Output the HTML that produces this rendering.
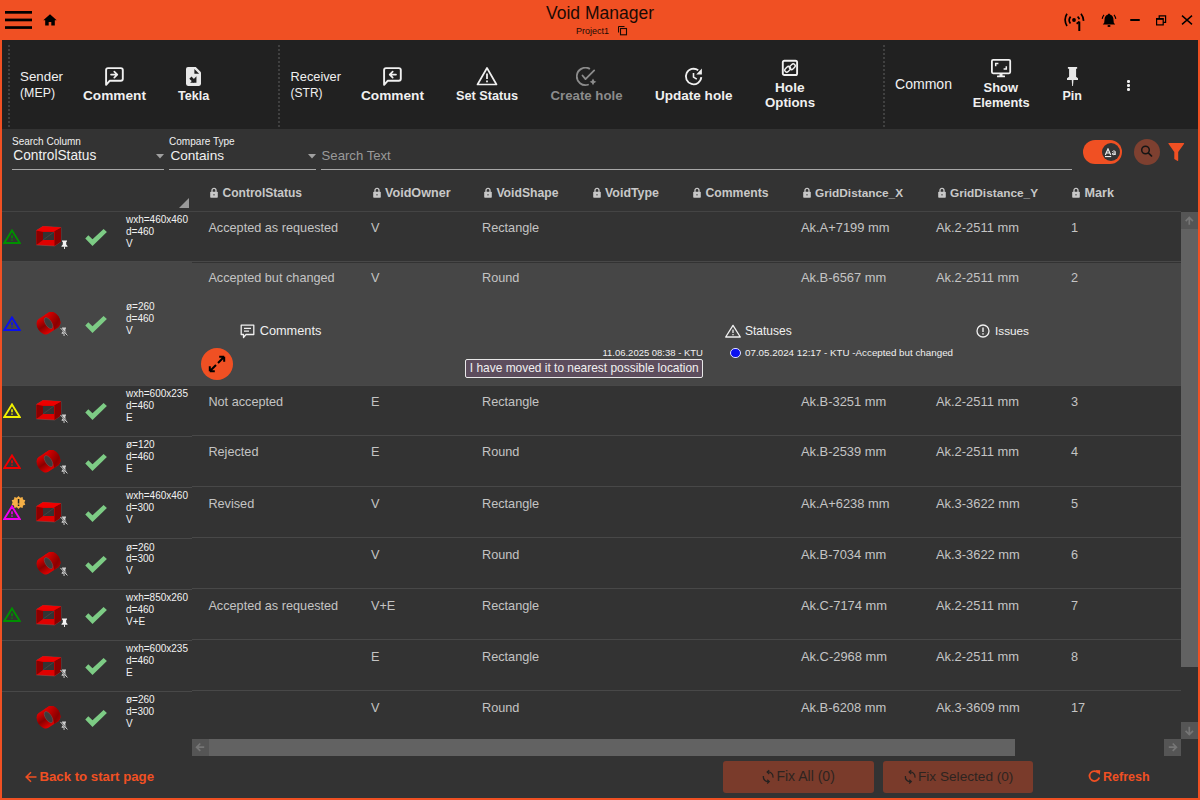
<!DOCTYPE html>
<html><head><meta charset="utf-8"><title>Void Manager</title>
<style>
html,body{margin:0;padding:0;width:1200px;height:800px;overflow:hidden;background:#333;}
.r{position:absolute;display:block;}
.t{position:absolute;white-space:nowrap;line-height:1;font-family:"Liberation Sans",sans-serif;}
</style></head><body>
<div class="r" style="left:0px;top:0px;width:1200px;height:800px;background:#333333;"></div>
<div class="r" style="left:0px;top:0px;width:1200px;height:40px;background:#f05023;"></div>
<div class="r" style="left:0px;top:40px;width:1200px;height:89px;background:#212121;"></div>
<div class="r" style="left:0px;top:0px;width:2px;height:800px;background:#f05023;"></div>
<div class="r" style="left:1198px;top:0px;width:2px;height:800px;background:#f05023;"></div>
<div class="r" style="left:0px;top:798px;width:1200px;height:2px;background:#f05023;"></div>
<div class="r" style="left:8px;top:45px;width:2px;height:82px;background:repeating-linear-gradient(to bottom,#404040 0,#404040 2px,transparent 2px,transparent 4px);"></div>
<div class="r" style="left:278px;top:45px;width:2px;height:82px;background:repeating-linear-gradient(to bottom,#404040 0,#404040 2px,transparent 2px,transparent 4px);"></div>
<div class="r" style="left:883px;top:45px;width:2px;height:82px;background:repeating-linear-gradient(to bottom,#404040 0,#404040 2px,transparent 2px,transparent 4px);"></div>
<svg class="r" style="left:5px;top:11px" width="27" height="18" viewBox="0 0 27 18"><rect x="0" y="0" width="27" height="2.7" fill="#000"/><rect x="0" y="7.6" width="27" height="2.7" fill="#000"/><rect x="0" y="15.2" width="27" height="2.7" fill="#000"/></svg>
<svg class="r" style="left:43px;top:14px" width="14" height="12" viewBox="0 0 14 12"><path d="M7 0.3 L13.7 6.3 L11.8 6.3 L11.8 11.5 L8.3 11.5 L8.3 8 L5.7 8 L5.7 11.5 L2.2 11.5 L2.2 6.3 L0.3 6.3 Z" fill="#000"/></svg>
<svg class="r" style="left:617px;top:25px" width="11" height="11" viewBox="0 0 11 11"><path d="M1.5 7.5 V1.5 H7.5" fill="none" stroke="#1a0a05" stroke-width="1"/><rect x="3.5" y="3.5" width="6" height="6.3" fill="none" stroke="#1a0a05" stroke-width="1.1"/></svg>
<svg class="r" style="left:1063px;top:12px" width="22" height="20" viewBox="0 0 22 20"><circle cx="11" cy="8" r="1.9" fill="#000"/><path d="M4 1.8 Q0.2 7.8 4 14" stroke="#000" stroke-width="1.7" fill="none"/><path d="M7.6 4.6 Q4.8 8 7.4 11.4" stroke="#000" stroke-width="1.7" fill="none"/><path d="M14.6 4.6 Q15.8 5.6 16.3 7.3" stroke="#000" stroke-width="1.7" fill="none"/><path d="M18 1.8 Q20.2 4.5 20.6 8.8" stroke="#000" stroke-width="1.7" fill="none"/><path d="M16.3 9.5 V19" stroke="#000" stroke-width="2"/><path d="M13.6 11.8 L16.3 9.8" stroke="#000" stroke-width="1.7"/></svg>
<svg class="r" style="left:1101px;top:12px" width="16" height="16" viewBox="0 0 16 16"><path d="M8 1.4 C8.8 1.4 9 2.2 9 2.6 C11.5 3.2 12.5 5.5 12.5 8 L12.8 10.8 L14.2 12.6 L1.8 12.6 L3.2 10.8 L3.5 8 C3.5 5.5 4.5 3.2 7 2.6 C7 2.2 7.2 1.4 8 1.4 Z" fill="#000"/><ellipse cx="8" cy="14" rx="1.6" ry="1.1" fill="#000"/><path d="M3 2.8 Q1.6 4.6 1.2 6.8 M13 2.8 Q14.4 4.6 14.8 6.8" stroke="#000" stroke-width="1.1" fill="none"/></svg>
<div class="r" style="left:1130px;top:19px;width:10px;height:2.4px;background:#000;border-radius:1px"></div>
<svg class="r" style="left:1155px;top:14px" width="12" height="12" viewBox="0 0 12 12"><rect x="1.6" y="4.6" width="6.6" height="6.3" fill="none" stroke="#000" stroke-width="1.2"/><rect x="1.6" y="4.2" width="6.6" height="1.6" fill="#000"/><path d="M4.2 4.2 V1.8 H10.6 V8.4 H8.2" fill="none" stroke="#000" stroke-width="1.2"/></svg>
<svg class="r" style="left:1181px;top:15px" width="12" height="10" viewBox="0 0 12 10"><path d="M1 0.6 L11 9.4 M11 0.6 L1 9.4" stroke="#000" stroke-width="1.4"/></svg>
<svg class="r" style="left:104px;top:66px" width="21" height="21" viewBox="0 0 21 21"><path d="M4 2.1 H16.8 Q18.8 2.1 18.8 4.1 V12.8 Q18.8 14.8 16.8 14.8 H5.6 L2.1 18.8 V4.1 Q2.1 2.1 4 2.1 Z" fill="none" stroke="#f0f0f0" stroke-width="1.9" stroke-linejoin="round"/><path d="M7 8.6 H13.2 M10.3 5.6 L13.3 8.6 L10.3 11.6" stroke="#f0f0f0" stroke-width="1.7" fill="none" stroke-linecap="round" stroke-linejoin="round"/></svg>
<svg class="r" style="left:381.6px;top:66px" width="21" height="21" viewBox="0 0 21 21"><path d="M4 2.1 H16.8 Q18.8 2.1 18.8 4.1 V12.8 Q18.8 14.8 16.8 14.8 H5.6 L2.1 18.8 V4.1 Q2.1 2.1 4 2.1 Z" fill="none" stroke="#f0f0f0" stroke-width="1.9" stroke-linejoin="round"/><path d="M14 8.6 H7.8 M10.7 5.6 L7.7 8.6 L10.7 11.6" stroke="#f0f0f0" stroke-width="1.7" fill="none" stroke-linecap="round" stroke-linejoin="round"/></svg>
<svg class="r" style="left:186px;top:67px" width="15" height="19" viewBox="0 0 15 19"><path d="M2 0 H9.75 L15 5.25 V16.8 Q15 18.9 13 18.9 H2 Q0 18.9 0 16.8 V2 Q0 0 2 0 Z" fill="#e8e8e8"/><path d="M8.35 2 L8.35 6.7 L13.1 6.7 Z" fill="#212121"/><path d="M10.45 9.35 V15.65 H4.15 Z" fill="#212121"/><path d="M4.4 10.6 L8.6 14.8" stroke="#212121" stroke-width="3"/></svg>
<svg class="r" style="left:476px;top:66px" width="22" height="20" viewBox="0 0 22 20"><path d="M11 2 L20.5 18.5 H1.5 Z" fill="none" stroke="#f0f0f0" stroke-width="1.7" stroke-linejoin="round"/><rect x="10.1" y="7.5" width="1.8" height="5.5" fill="#f0f0f0"/><rect x="10.1" y="14.5" width="1.8" height="1.8" fill="#f0f0f0"/></svg>
<svg class="r" style="left:576px;top:67px" width="22" height="20" viewBox="0 0 22 20"><path d="M13.3 1.6 A8.7 8.7 0 1 0 12 17.75" fill="none" stroke="#8c8c8c" stroke-width="1.8" stroke-linecap="round"/><path d="M6.5 8.5 L9.5 12.1 L18.2 3.4" fill="none" stroke="#8c8c8c" stroke-width="1.8" stroke-linecap="round" stroke-linejoin="round"/><path d="M17 11.4 Q17.7 14.1 20.4 14.8 Q17.7 15.5 17 18.2 Q16.3 15.5 13.6 14.8 Q16.3 14.1 17 11.4 Z" fill="#8c8c8c"/></svg>
<svg class="r" style="left:684px;top:67px" width="20" height="19" viewBox="0 0 20 19"><path d="M17.3 10.2 A7.75 7.75 0 1 1 14.2 3.3" fill="none" stroke="#f0f0f0" stroke-width="1.8"/><path d="M17.9 1.5 V7.4 H12.2 Z" fill="#f0f0f0"/><path d="M9.5 5.9 V10.1 L12.8 12.2" fill="none" stroke="#f0f0f0" stroke-width="1.6" stroke-linejoin="round"/></svg>
<svg class="r" style="left:781px;top:59px" width="18" height="18" viewBox="0 0 18 18"><rect x="1.8" y="1.75" width="14.3" height="14.3" rx="1.6" fill="none" stroke="#f0f0f0" stroke-width="1.9"/><g transform="translate(9 9) rotate(-45)"><rect x="-0.6" y="-1.25" width="6.4" height="4" rx="2" fill="none" stroke="#f0f0f0" stroke-width="1.4"/><rect x="-5.8" y="-2.75" width="6.4" height="4" rx="2" fill="none" stroke="#f0f0f0" stroke-width="1.4"/></g></svg>
<svg class="r" style="left:990px;top:58px" width="22" height="20" viewBox="0 0 22 20"><rect x="1.9" y="1.9" width="18.3" height="13.4" rx="1.2" fill="none" stroke="#f0f0f0" stroke-width="1.8"/><path d="M5.7 8.2 V5.4 H8.4 M16.3 8.2 V11 H13.6" fill="none" stroke="#f0f0f0" stroke-width="1.5"/><rect x="9.5" y="15" width="3" height="3" fill="#f0f0f0"/><rect x="7" y="17.6" width="8" height="1.6" rx="0.5" fill="#f0f0f0"/></svg>
<svg class="r" style="left:1066px;top:66px" width="13" height="21" viewBox="0 0 13 21"><path d="M1.9 0.9 H11.15 V2.8 H10.1 V10.7 L12 12.3 V14 H1 V12.3 L3.1 10.7 V2.8 H1.9 Z" fill="#e8e8e8"/><path d="M5.75 14 H7.45 L7 20 H6.2 Z" fill="#e8e8e8"/></svg>
<div class="r" style="left:1127px;top:80px;width:2.5px;height:2.5px;background:#f0f0f0;border-radius:50%"></div>
<div class="r" style="left:1127px;top:84px;width:2.5px;height:2.5px;background:#f0f0f0;border-radius:50%"></div>
<div class="r" style="left:1127px;top:88px;width:2.5px;height:2.5px;background:#f0f0f0;border-radius:50%"></div>
<div class="r" style="left:12px;top:169px;width:152px;height:1px;background:#a8a8a8;"></div>
<div class="r" style="left:169px;top:169px;width:147px;height:1px;background:#a8a8a8;"></div>
<div class="r" style="left:321px;top:169px;width:751px;height:1px;background:#a8a8a8;"></div>
<svg class="r" style="left:156px;top:154px" width="8" height="5" viewBox="0 0 8 5"><path d="M0 0 H8 L4 4.5 Z" fill="#a0a0a0"/></svg>
<svg class="r" style="left:308px;top:154px" width="8" height="5" viewBox="0 0 8 5"><path d="M0 0 H8 L4 4.5 Z" fill="#a0a0a0"/></svg>
<div class="r" style="left:1083px;top:140px;width:39px;height:24px;background:#f05023;border-radius:12px"></div>
<div class="r" style="left:1101.5px;top:143px;width:18px;height:18px;background:#333333;border-radius:50%"></div>
<svg class="r" style="left:1104px;top:148px" width="13" height="10" viewBox="0 0 13 10"><path d="M1.3 7 L4 0.9 L6.7 7 M2.2 5 H5.8" fill="none" stroke="#ececec" stroke-width="1.2"/><path d="M8.3 3.6 Q9.8 2.3 11.2 3.3 V7 M11.2 5 Q8.2 4.6 8.2 6 Q8.4 7.3 11.2 6.3" fill="none" stroke="#ececec" stroke-width="1"/><rect x="1" y="8" width="6.2" height="1.1" fill="#ececec"/></svg>
<div class="r" style="left:1134px;top:139px;width:26px;height:26px;background:#7e4030;border-radius:50%"></div>
<svg class="r" style="left:1134px;top:139px" width="26" height="26" viewBox="0 0 26 26"><circle cx="11.5" cy="11" r="3.8" fill="none" stroke="#151515" stroke-width="1.5"/><path d="M14.3 13.8 L18 17.5" stroke="#151515" stroke-width="1.7"/></svg>
<svg class="r" style="left:1168px;top:143px" width="17" height="19" viewBox="0 0 17 19"><path d="M0.3 0.6 Q0.3 0.1 0.9 0.1 H15.6 Q16.3 0.1 16.1 0.7 L10.2 9 V17.6 Q10.2 18.2 9.6 18 L6.3 16 V9 Z" fill="#f05023"/></svg>
<svg class="r" style="left:179px;top:198px" width="10" height="10" viewBox="0 0 10 10"><path d="M10 0 V10 H0 Z" fill="#9a9a9a"/></svg>
<svg class="r" style="left:210px;top:187px" width="8" height="11" viewBox="0 0 8 11"><path d="M2 5 V3.3 A2 2 0 0 1 6 3.3 V5" fill="none" stroke="#c8c8c8" stroke-width="1.3"/><rect x="0.2" y="4.8" width="7.6" height="6" rx="0.8" fill="#c8c8c8"/><rect x="3.4" y="7.2" width="1.2" height="1.2" fill="#333"/></svg>
<svg class="r" style="left:373px;top:187px" width="8" height="11" viewBox="0 0 8 11"><path d="M2 5 V3.3 A2 2 0 0 1 6 3.3 V5" fill="none" stroke="#c8c8c8" stroke-width="1.3"/><rect x="0.2" y="4.8" width="7.6" height="6" rx="0.8" fill="#c8c8c8"/><rect x="3.4" y="7.2" width="1.2" height="1.2" fill="#333"/></svg>
<svg class="r" style="left:484px;top:187px" width="8" height="11" viewBox="0 0 8 11"><path d="M2 5 V3.3 A2 2 0 0 1 6 3.3 V5" fill="none" stroke="#c8c8c8" stroke-width="1.3"/><rect x="0.2" y="4.8" width="7.6" height="6" rx="0.8" fill="#c8c8c8"/><rect x="3.4" y="7.2" width="1.2" height="1.2" fill="#333"/></svg>
<svg class="r" style="left:593px;top:187px" width="8" height="11" viewBox="0 0 8 11"><path d="M2 5 V3.3 A2 2 0 0 1 6 3.3 V5" fill="none" stroke="#c8c8c8" stroke-width="1.3"/><rect x="0.2" y="4.8" width="7.6" height="6" rx="0.8" fill="#c8c8c8"/><rect x="3.4" y="7.2" width="1.2" height="1.2" fill="#333"/></svg>
<svg class="r" style="left:693px;top:187px" width="8" height="11" viewBox="0 0 8 11"><path d="M2 5 V3.3 A2 2 0 0 1 6 3.3 V5" fill="none" stroke="#c8c8c8" stroke-width="1.3"/><rect x="0.2" y="4.8" width="7.6" height="6" rx="0.8" fill="#c8c8c8"/><rect x="3.4" y="7.2" width="1.2" height="1.2" fill="#333"/></svg>
<svg class="r" style="left:803px;top:187px" width="8" height="11" viewBox="0 0 8 11"><path d="M2 5 V3.3 A2 2 0 0 1 6 3.3 V5" fill="none" stroke="#c8c8c8" stroke-width="1.3"/><rect x="0.2" y="4.8" width="7.6" height="6" rx="0.8" fill="#c8c8c8"/><rect x="3.4" y="7.2" width="1.2" height="1.2" fill="#333"/></svg>
<svg class="r" style="left:938px;top:187px" width="8" height="11" viewBox="0 0 8 11"><path d="M2 5 V3.3 A2 2 0 0 1 6 3.3 V5" fill="none" stroke="#c8c8c8" stroke-width="1.3"/><rect x="0.2" y="4.8" width="7.6" height="6" rx="0.8" fill="#c8c8c8"/><rect x="3.4" y="7.2" width="1.2" height="1.2" fill="#333"/></svg>
<svg class="r" style="left:1072px;top:187px" width="8" height="11" viewBox="0 0 8 11"><path d="M2 5 V3.3 A2 2 0 0 1 6 3.3 V5" fill="none" stroke="#c8c8c8" stroke-width="1.3"/><rect x="0.2" y="4.8" width="7.6" height="6" rx="0.8" fill="#c8c8c8"/><rect x="3.4" y="7.2" width="1.2" height="1.2" fill="#333"/></svg>
<div class="r" style="left:2px;top:211px;width:1179px;height:1px;background:#444444;"></div>
<div class="r" style="left:192px;top:261px;width:989px;height:1px;background:#484848;"></div>
<div class="r" style="left:2px;top:261px;width:190px;height:1px;background:#484848;"></div>
<svg class="r" style="left:3px;top:228.5px" width="18" height="16" viewBox="0 0 18 16"><path d="M9 1.4 L16.8 14.0 H1.2 Z" fill="none" stroke="#009000" stroke-width="1.9" stroke-linejoin="miter"/><rect x="8.2" y="6.3" width="1.6" height="3" fill="#009000"/><rect x="8.2" y="10.5" width="1.6" height="1.2" fill="#009000"/></svg>
<svg class="r" style="left:36px;top:226px" width="26" height="21" viewBox="0 0 26 21"><path d="M0.3 4.5 L7 0.3 L25 1.5 L25 15.5 L18.5 20 L0.3 19 Z" fill="#e00000" stroke="#9a6060" stroke-width="0.4"/><path d="M18.5 5 L25 1.5 L25 15.5 L18.5 20 Z" fill="#8a0000"/><path d="M0.3 4.5 L7 0.3 L25 1.5 L18.5 5 Z" fill="#f00000"/><path d="M7 6 L18 6 L18 14 L7 14 Z" fill="#333"/><path d="M0.3 4.5 L7 6 L7 14 L0.3 19 Z" fill="#8a0000"/><path d="M7 14 L18 6" stroke="#555" stroke-width="0.5"/></svg>
<svg class="r" style="left:60.5px;top:239.5px" width="7" height="9" viewBox="0 0 7 9"><path d="M1 0.5 H6 V1.8 H5.2 V4.5 L6.5 6 V6.8 H0.5 V6 L1.8 4.5 V1.8 H1 Z" fill="#f4f4f4"/><rect x="3.1" y="6.5" width="0.9" height="2.5" fill="#f4f4f4"/></svg>
<svg class="r" style="left:85px;top:228.5px" width="23" height="18" viewBox="0 0 23 18"><path d="M0.25 9.6 L3.3 6.3 L7.5 10.2 L18.6 0 L21.9 3 L7.5 17 Z" fill="#7dcc85"/></svg>
<div class="r" style="left:2px;top:262px;width:1179px;height:124px;background:#464646;"></div>
<div class="r" style="left:192px;top:385px;width:989px;height:1px;background:#484848;"></div>
<div class="r" style="left:2px;top:385px;width:190px;height:1px;background:#484848;"></div>
<svg class="r" style="left:3px;top:315.5px" width="18" height="16" viewBox="0 0 18 16"><path d="M9 1.4 L16.8 14.0 H1.2 Z" fill="none" stroke="#0a10f0" stroke-width="1.9" stroke-linejoin="miter"/><rect x="8.2" y="6.3" width="1.6" height="3" fill="#0a10f0"/><rect x="8.2" y="10.5" width="1.6" height="1.2" fill="#0a10f0"/></svg>
<svg class="r" style="left:36px;top:311.5px" width="26" height="24" viewBox="0 0 26 24"><defs><linearGradient id="cgb1" gradientUnits="userSpaceOnUse" x1="0" y1="-8.8" x2="0" y2="8.8"><stop offset="0" stop-color="#e00000"/><stop offset="0.5" stop-color="#8a0000"/><stop offset="1" stop-color="#e40000"/></linearGradient><linearGradient id="cgf1" gradientUnits="userSpaceOnUse" x1="0" y1="-8.8" x2="8" y2="8"><stop offset="0" stop-color="#e80000"/><stop offset="0.8" stop-color="#8a0000"/><stop offset="1" stop-color="#a00000"/></linearGradient></defs><g transform="translate(12.5 11.1) rotate(-33.4)"><path d="M-6 -8.8 L6 -8.8 A6 8.8 0 0 1 6 8.8 L-6 8.8 A6 8.8 0 0 1 -6 -8.8 Z" fill="url(#cgb1)"/><path d="M0 -8.8 L6 -8.8 A6 8.8 0 0 1 6 8.8 L0 8.8 A3.2 8.8 0 0 0 0 -8.8 Z" fill="url(#cgf1)"/><ellipse cx="0" cy="0" rx="3" ry="6.3" fill="#3c3c3c" stroke="#6a6a6a" stroke-width="0.4"/></g></svg>
<svg class="r" style="left:59.5px;top:326.5px" width="8" height="9" viewBox="0 0 8 9"><path d="M2 0.5 H6 V1.8 H5.4 V4.5 L6.4 6 V6.8 H1.6 V6 L2.6 4.5 V1.8 H2 Z" fill="#cfcfcf"/><rect x="3.6" y="6.5" width="0.9" height="2.5" fill="#d8d8d8"/><path d="M0.4 0.9 L7.4 8.4" stroke="#333" stroke-width="1.5"/><path d="M0.4 0.9 L7.4 8.4" stroke="#e8e8e8" stroke-width="0.9"/></svg>
<svg class="r" style="left:85px;top:315.5px" width="23" height="18" viewBox="0 0 23 18"><path d="M0.25 9.6 L3.3 6.3 L7.5 10.2 L18.6 0 L21.9 3 L7.5 17 Z" fill="#7dcc85"/></svg>
<div class="r" style="left:192px;top:435px;width:989px;height:1px;background:#484848;"></div>
<div class="r" style="left:2px;top:436px;width:190px;height:1px;background:#484848;"></div>
<svg class="r" style="left:3px;top:402.5px" width="18" height="16" viewBox="0 0 18 16"><path d="M9 1.4 L16.8 14.0 H1.2 Z" fill="none" stroke="#f0f000" stroke-width="1.9" stroke-linejoin="miter"/><rect x="8.2" y="6.3" width="1.6" height="3" fill="#f0f000"/><rect x="8.2" y="10.5" width="1.6" height="1.2" fill="#f0f000"/></svg>
<svg class="r" style="left:36px;top:400px" width="26" height="21" viewBox="0 0 26 21"><path d="M0.3 4.5 L7 0.3 L25 1.5 L25 15.5 L18.5 20 L0.3 19 Z" fill="#e00000" stroke="#9a6060" stroke-width="0.4"/><path d="M18.5 5 L25 1.5 L25 15.5 L18.5 20 Z" fill="#8a0000"/><path d="M0.3 4.5 L7 0.3 L25 1.5 L18.5 5 Z" fill="#f00000"/><path d="M7 6 L18 6 L18 14 L7 14 Z" fill="#333"/><path d="M0.3 4.5 L7 6 L7 14 L0.3 19 Z" fill="#8a0000"/><path d="M7 14 L18 6" stroke="#555" stroke-width="0.5"/></svg>
<svg class="r" style="left:59.5px;top:413.5px" width="8" height="9" viewBox="0 0 8 9"><path d="M2 0.5 H6 V1.8 H5.4 V4.5 L6.4 6 V6.8 H1.6 V6 L2.6 4.5 V1.8 H2 Z" fill="#cfcfcf"/><rect x="3.6" y="6.5" width="0.9" height="2.5" fill="#d8d8d8"/><path d="M0.4 0.9 L7.4 8.4" stroke="#333" stroke-width="1.5"/><path d="M0.4 0.9 L7.4 8.4" stroke="#e8e8e8" stroke-width="0.9"/></svg>
<svg class="r" style="left:85px;top:402.5px" width="23" height="18" viewBox="0 0 23 18"><path d="M0.25 9.6 L3.3 6.3 L7.5 10.2 L18.6 0 L21.9 3 L7.5 17 Z" fill="#7dcc85"/></svg>
<div class="r" style="left:192px;top:486px;width:989px;height:1px;background:#484848;"></div>
<div class="r" style="left:2px;top:487px;width:190px;height:1px;background:#484848;"></div>
<svg class="r" style="left:3px;top:453.5px" width="18" height="16" viewBox="0 0 18 16"><path d="M9 1.4 L16.8 14.0 H1.2 Z" fill="none" stroke="#f00000" stroke-width="1.9" stroke-linejoin="miter"/><rect x="8.2" y="6.3" width="1.6" height="3" fill="#f00000"/><rect x="8.2" y="10.5" width="1.6" height="1.2" fill="#f00000"/></svg>
<svg class="r" style="left:36px;top:449.5px" width="26" height="24" viewBox="0 0 26 24"><defs><linearGradient id="cgb2" gradientUnits="userSpaceOnUse" x1="0" y1="-8.8" x2="0" y2="8.8"><stop offset="0" stop-color="#e00000"/><stop offset="0.5" stop-color="#8a0000"/><stop offset="1" stop-color="#e40000"/></linearGradient><linearGradient id="cgf2" gradientUnits="userSpaceOnUse" x1="0" y1="-8.8" x2="8" y2="8"><stop offset="0" stop-color="#e80000"/><stop offset="0.8" stop-color="#8a0000"/><stop offset="1" stop-color="#a00000"/></linearGradient></defs><g transform="translate(12.5 11.1) rotate(-33.4)"><path d="M-6 -8.8 L6 -8.8 A6 8.8 0 0 1 6 8.8 L-6 8.8 A6 8.8 0 0 1 -6 -8.8 Z" fill="url(#cgb2)"/><path d="M0 -8.8 L6 -8.8 A6 8.8 0 0 1 6 8.8 L0 8.8 A3.2 8.8 0 0 0 0 -8.8 Z" fill="url(#cgf2)"/><ellipse cx="0" cy="0" rx="3" ry="6.3" fill="#3c3c3c" stroke="#6a6a6a" stroke-width="0.4"/></g></svg>
<svg class="r" style="left:59.5px;top:464.5px" width="8" height="9" viewBox="0 0 8 9"><path d="M2 0.5 H6 V1.8 H5.4 V4.5 L6.4 6 V6.8 H1.6 V6 L2.6 4.5 V1.8 H2 Z" fill="#cfcfcf"/><rect x="3.6" y="6.5" width="0.9" height="2.5" fill="#d8d8d8"/><path d="M0.4 0.9 L7.4 8.4" stroke="#333" stroke-width="1.5"/><path d="M0.4 0.9 L7.4 8.4" stroke="#e8e8e8" stroke-width="0.9"/></svg>
<svg class="r" style="left:85px;top:453.5px" width="23" height="18" viewBox="0 0 23 18"><path d="M0.25 9.6 L3.3 6.3 L7.5 10.2 L18.6 0 L21.9 3 L7.5 17 Z" fill="#7dcc85"/></svg>
<div class="r" style="left:192px;top:537px;width:989px;height:1px;background:#484848;"></div>
<div class="r" style="left:2px;top:538px;width:190px;height:1px;background:#484848;"></div>
<svg class="r" style="left:3px;top:504.7px" width="18" height="16" viewBox="0 0 18 16"><path d="M9 1.4 L16.8 14.0 H1.2 Z" fill="none" stroke="#f000f0" stroke-width="1.9" stroke-linejoin="miter"/><rect x="8.2" y="6.3" width="1.6" height="3" fill="#f000f0"/><rect x="8.2" y="10.5" width="1.6" height="1.2" fill="#f000f0"/></svg>
<svg class="r" style="left:36px;top:502.2px" width="26" height="21" viewBox="0 0 26 21"><path d="M0.3 4.5 L7 0.3 L25 1.5 L25 15.5 L18.5 20 L0.3 19 Z" fill="#e00000" stroke="#9a6060" stroke-width="0.4"/><path d="M18.5 5 L25 1.5 L25 15.5 L18.5 20 Z" fill="#8a0000"/><path d="M0.3 4.5 L7 0.3 L25 1.5 L18.5 5 Z" fill="#f00000"/><path d="M7 6 L18 6 L18 14 L7 14 Z" fill="#333"/><path d="M0.3 4.5 L7 6 L7 14 L0.3 19 Z" fill="#8a0000"/><path d="M7 14 L18 6" stroke="#555" stroke-width="0.5"/></svg>
<svg class="r" style="left:59.5px;top:515.7px" width="8" height="9" viewBox="0 0 8 9"><path d="M2 0.5 H6 V1.8 H5.4 V4.5 L6.4 6 V6.8 H1.6 V6 L2.6 4.5 V1.8 H2 Z" fill="#cfcfcf"/><rect x="3.6" y="6.5" width="0.9" height="2.5" fill="#d8d8d8"/><path d="M0.4 0.9 L7.4 8.4" stroke="#333" stroke-width="1.5"/><path d="M0.4 0.9 L7.4 8.4" stroke="#e8e8e8" stroke-width="0.9"/></svg>
<svg class="r" style="left:85px;top:504.7px" width="23" height="18" viewBox="0 0 23 18"><path d="M0.25 9.6 L3.3 6.3 L7.5 10.2 L18.6 0 L21.9 3 L7.5 17 Z" fill="#7dcc85"/></svg>
<div class="r" style="left:192px;top:588px;width:989px;height:1px;background:#484848;"></div>
<div class="r" style="left:2px;top:589px;width:190px;height:1px;background:#484848;"></div>
<svg class="r" style="left:36px;top:551.9px" width="26" height="24" viewBox="0 0 26 24"><defs><linearGradient id="cgb3" gradientUnits="userSpaceOnUse" x1="0" y1="-8.8" x2="0" y2="8.8"><stop offset="0" stop-color="#e00000"/><stop offset="0.5" stop-color="#8a0000"/><stop offset="1" stop-color="#e40000"/></linearGradient><linearGradient id="cgf3" gradientUnits="userSpaceOnUse" x1="0" y1="-8.8" x2="8" y2="8"><stop offset="0" stop-color="#e80000"/><stop offset="0.8" stop-color="#8a0000"/><stop offset="1" stop-color="#a00000"/></linearGradient></defs><g transform="translate(12.5 11.1) rotate(-33.4)"><path d="M-6 -8.8 L6 -8.8 A6 8.8 0 0 1 6 8.8 L-6 8.8 A6 8.8 0 0 1 -6 -8.8 Z" fill="url(#cgb3)"/><path d="M0 -8.8 L6 -8.8 A6 8.8 0 0 1 6 8.8 L0 8.8 A3.2 8.8 0 0 0 0 -8.8 Z" fill="url(#cgf3)"/><ellipse cx="0" cy="0" rx="3" ry="6.3" fill="#3c3c3c" stroke="#6a6a6a" stroke-width="0.4"/></g></svg>
<svg class="r" style="left:59.5px;top:566.9px" width="8" height="9" viewBox="0 0 8 9"><path d="M2 0.5 H6 V1.8 H5.4 V4.5 L6.4 6 V6.8 H1.6 V6 L2.6 4.5 V1.8 H2 Z" fill="#cfcfcf"/><rect x="3.6" y="6.5" width="0.9" height="2.5" fill="#d8d8d8"/><path d="M0.4 0.9 L7.4 8.4" stroke="#333" stroke-width="1.5"/><path d="M0.4 0.9 L7.4 8.4" stroke="#e8e8e8" stroke-width="0.9"/></svg>
<svg class="r" style="left:85px;top:555.9px" width="23" height="18" viewBox="0 0 23 18"><path d="M0.25 9.6 L3.3 6.3 L7.5 10.2 L18.6 0 L21.9 3 L7.5 17 Z" fill="#7dcc85"/></svg>
<div class="r" style="left:192px;top:639px;width:989px;height:1px;background:#484848;"></div>
<div class="r" style="left:2px;top:640px;width:190px;height:1px;background:#484848;"></div>
<svg class="r" style="left:3px;top:607.1px" width="18" height="16" viewBox="0 0 18 16"><path d="M9 1.4 L16.8 14.0 H1.2 Z" fill="none" stroke="#009000" stroke-width="1.9" stroke-linejoin="miter"/><rect x="8.2" y="6.3" width="1.6" height="3" fill="#009000"/><rect x="8.2" y="10.5" width="1.6" height="1.2" fill="#009000"/></svg>
<svg class="r" style="left:36px;top:604.6px" width="26" height="21" viewBox="0 0 26 21"><path d="M0.3 4.5 L7 0.3 L25 1.5 L25 15.5 L18.5 20 L0.3 19 Z" fill="#e00000" stroke="#9a6060" stroke-width="0.4"/><path d="M18.5 5 L25 1.5 L25 15.5 L18.5 20 Z" fill="#8a0000"/><path d="M0.3 4.5 L7 0.3 L25 1.5 L18.5 5 Z" fill="#f00000"/><path d="M7 6 L18 6 L18 14 L7 14 Z" fill="#333"/><path d="M0.3 4.5 L7 6 L7 14 L0.3 19 Z" fill="#8a0000"/><path d="M7 14 L18 6" stroke="#555" stroke-width="0.5"/></svg>
<svg class="r" style="left:60.5px;top:618.1px" width="7" height="9" viewBox="0 0 7 9"><path d="M1 0.5 H6 V1.8 H5.2 V4.5 L6.5 6 V6.8 H0.5 V6 L1.8 4.5 V1.8 H1 Z" fill="#f4f4f4"/><rect x="3.1" y="6.5" width="0.9" height="2.5" fill="#f4f4f4"/></svg>
<svg class="r" style="left:85px;top:607.1px" width="23" height="18" viewBox="0 0 23 18"><path d="M0.25 9.6 L3.3 6.3 L7.5 10.2 L18.6 0 L21.9 3 L7.5 17 Z" fill="#7dcc85"/></svg>
<div class="r" style="left:192px;top:690px;width:989px;height:1px;background:#484848;"></div>
<div class="r" style="left:2px;top:691px;width:190px;height:1px;background:#484848;"></div>
<svg class="r" style="left:36px;top:655.8px" width="26" height="21" viewBox="0 0 26 21"><path d="M0.3 4.5 L7 0.3 L25 1.5 L25 15.5 L18.5 20 L0.3 19 Z" fill="#e00000" stroke="#9a6060" stroke-width="0.4"/><path d="M18.5 5 L25 1.5 L25 15.5 L18.5 20 Z" fill="#8a0000"/><path d="M0.3 4.5 L7 0.3 L25 1.5 L18.5 5 Z" fill="#f00000"/><path d="M7 6 L18 6 L18 14 L7 14 Z" fill="#333"/><path d="M0.3 4.5 L7 6 L7 14 L0.3 19 Z" fill="#8a0000"/><path d="M7 14 L18 6" stroke="#555" stroke-width="0.5"/></svg>
<svg class="r" style="left:59.5px;top:669.3px" width="8" height="9" viewBox="0 0 8 9"><path d="M2 0.5 H6 V1.8 H5.4 V4.5 L6.4 6 V6.8 H1.6 V6 L2.6 4.5 V1.8 H2 Z" fill="#cfcfcf"/><rect x="3.6" y="6.5" width="0.9" height="2.5" fill="#d8d8d8"/><path d="M0.4 0.9 L7.4 8.4" stroke="#333" stroke-width="1.5"/><path d="M0.4 0.9 L7.4 8.4" stroke="#e8e8e8" stroke-width="0.9"/></svg>
<svg class="r" style="left:85px;top:658.3px" width="23" height="18" viewBox="0 0 23 18"><path d="M0.25 9.6 L3.3 6.3 L7.5 10.2 L18.6 0 L21.9 3 L7.5 17 Z" fill="#7dcc85"/></svg>
<svg class="r" style="left:36px;top:705.5px" width="26" height="24" viewBox="0 0 26 24"><defs><linearGradient id="cgb4" gradientUnits="userSpaceOnUse" x1="0" y1="-8.8" x2="0" y2="8.8"><stop offset="0" stop-color="#e00000"/><stop offset="0.5" stop-color="#8a0000"/><stop offset="1" stop-color="#e40000"/></linearGradient><linearGradient id="cgf4" gradientUnits="userSpaceOnUse" x1="0" y1="-8.8" x2="8" y2="8"><stop offset="0" stop-color="#e80000"/><stop offset="0.8" stop-color="#8a0000"/><stop offset="1" stop-color="#a00000"/></linearGradient></defs><g transform="translate(12.5 11.1) rotate(-33.4)"><path d="M-6 -8.8 L6 -8.8 A6 8.8 0 0 1 6 8.8 L-6 8.8 A6 8.8 0 0 1 -6 -8.8 Z" fill="url(#cgb4)"/><path d="M0 -8.8 L6 -8.8 A6 8.8 0 0 1 6 8.8 L0 8.8 A3.2 8.8 0 0 0 0 -8.8 Z" fill="url(#cgf4)"/><ellipse cx="0" cy="0" rx="3" ry="6.3" fill="#3c3c3c" stroke="#6a6a6a" stroke-width="0.4"/></g></svg>
<svg class="r" style="left:59.5px;top:720.5px" width="8" height="9" viewBox="0 0 8 9"><path d="M2 0.5 H6 V1.8 H5.4 V4.5 L6.4 6 V6.8 H1.6 V6 L2.6 4.5 V1.8 H2 Z" fill="#cfcfcf"/><rect x="3.6" y="6.5" width="0.9" height="2.5" fill="#d8d8d8"/><path d="M0.4 0.9 L7.4 8.4" stroke="#333" stroke-width="1.5"/><path d="M0.4 0.9 L7.4 8.4" stroke="#e8e8e8" stroke-width="0.9"/></svg>
<svg class="r" style="left:85px;top:709.5px" width="23" height="18" viewBox="0 0 23 18"><path d="M0.25 9.6 L3.3 6.3 L7.5 10.2 L18.6 0 L21.9 3 L7.5 17 Z" fill="#7dcc85"/></svg>
<div class="r" style="left:192px;top:262px;width:989px;height:1px;background:#333333;"></div>
<svg class="r" style="left:11px;top:496px" width="15" height="13" viewBox="0 0 15 13"><path d="M7.5 0 L9.2 1.7 L11.6 1.1 L12 3.5 L14.3 4.3 L13.4 6.5 L14.3 8.7 L12 9.5 L11.6 11.9 L9.2 11.3 L7.5 13 L5.8 11.3 L3.4 11.9 L3 9.5 L0.7 8.7 L1.6 6.5 L0.7 4.3 L3 3.5 L3.4 1.1 L5.8 1.7 Z" fill="#f5b046"/><rect x="6.8" y="3" width="1.5" height="4.5" fill="#222"/><rect x="6.8" y="8.5" width="1.5" height="1.5" fill="#222"/></svg>
<div class="r" style="left:201px;top:348px;width:32px;height:32px;background:#f05023;border-radius:50%"></div>
<svg class="r" style="left:201px;top:348px" width="32" height="32" viewBox="0 0 32 32"><path d="M17 15 L23.2 8.8 M23.2 8.8 H18.2 M23.2 8.8 V13.8 M15 17 L8.8 23.2 M8.8 23.2 H13.8 M8.8 23.2 V18.2" stroke="#000" stroke-width="2" fill="none" stroke-linecap="butt"/></svg>
<svg class="r" style="left:239.5px;top:323.5px" width="15" height="15" viewBox="0 0 15 15"><path d="M1.2 1.2 H13.8 V10.5 H6 L3.5 13.5 V10.5 H1.2 Z" fill="none" stroke="#f0f0f0" stroke-width="1.3" stroke-linejoin="round"/><path d="M4 4.3 H11 M4 7.2 H9" stroke="#f0f0f0" stroke-width="1.2"/></svg>
<div class="r" style="left:465px;top:359px;width:237.5px;height:18.6px;background:#5d4d5d;box-sizing:border-box;border:1px solid #e8e8e8;border-radius:2px"></div>
<svg class="r" style="left:725px;top:323.5px" width="17" height="15" viewBox="0 0 17 15"><path d="M8 1.4 L15.3 13 H0.7 Z" fill="none" stroke="#f0f0f0" stroke-width="1.3" stroke-linejoin="round"/><rect x="7.35" y="5.6" width="1.3" height="3.4" fill="#f0f0f0"/><rect x="7.35" y="10" width="1.3" height="1.3" fill="#f0f0f0"/></svg>
<div class="r" style="left:730px;top:347.5px;width:10.5px;height:10.5px;background:#0a10f0;border-radius:50%;box-sizing:border-box;border:1px solid #e0e0ff"></div>
<svg class="r" style="left:975.5px;top:323.6px" width="14" height="14" viewBox="0 0 14 14"><circle cx="7" cy="7" r="6" fill="none" stroke="#f0f0f0" stroke-width="1.3"/><rect x="6.3" y="3.5" width="1.4" height="4.5" fill="#f0f0f0"/><rect x="6.3" y="9.2" width="1.4" height="1.4" fill="#f0f0f0"/></svg>
<div class="r" style="left:1181px;top:212px;width:17px;height:16.5px;background:#555555;"></div>
<svg class="r" style="left:1181px;top:212px" width="17" height="17" viewBox="0 0 17 17"><path d="M8.3 5.4 V12.8 M4.7 9.1 L8.3 5.5 L11.9 9.1" stroke="#767676" stroke-width="1.7" fill="none"/></svg>
<div class="r" style="left:1181px;top:229px;width:17px;height:438px;background:#626262;"></div>
<div class="r" style="left:1181px;top:722px;width:17px;height:17px;background:#555555;"></div>
<svg class="r" style="left:1181px;top:722px" width="17" height="17" viewBox="0 0 17 17"><path d="M8.3 4.7 V12.4 M4.6 8.8 L8.3 12.5 L12 8.8" stroke="#767676" stroke-width="1.7" fill="none"/></svg>
<div class="r" style="left:192px;top:739px;width:17px;height:17px;background:#555555;"></div>
<svg class="r" style="left:192px;top:739px" width="17" height="17" viewBox="0 0 17 17"><path d="M4.5 8.2 H12.2 M8.3 4.5 L4.6 8.2 L8.3 11.9" stroke="#767676" stroke-width="1.7" fill="none"/></svg>
<div class="r" style="left:209px;top:739px;width:806px;height:17px;background:#626262;"></div>
<div class="r" style="left:1164px;top:739px;width:17px;height:17px;background:#555555;"></div>
<svg class="r" style="left:1164px;top:739px" width="17" height="17" viewBox="0 0 17 17"><path d="M4.8 8.2 H12.5 M8.7 4.5 L12.4 8.2 L8.7 11.9" stroke="#767676" stroke-width="1.7" fill="none"/></svg>
<svg class="r" style="left:25px;top:771px" width="12" height="12" viewBox="0 0 12 12"><path d="M11.5 6 H1.5 M6 1.2 L1.2 6 L6 10.8" stroke="#f05023" stroke-width="1.6" fill="none"/></svg>
<div class="r" style="left:723px;top:761px;width:150.5px;height:32px;background:#7a3b2b;border-radius:3px"></div>
<div class="r" style="left:883px;top:761px;width:150px;height:32px;background:#7a3b2b;border-radius:3px"></div>
<svg class="r" style="left:762px;top:769px" width="13" height="16" viewBox="0 0 13 16"><path d="M11 8.6 A4.8 4.8 0 0 0 5.4 3.05 M1.4 7 A4.8 4.8 0 0 0 7 12.55" fill="none" stroke="#262220" stroke-width="1.3"/><path d="M7.2 1.2 L5.2 3.05 L7.2 4.9 M5.2 10.7 L7.2 12.55 L5.2 14.4" fill="none" stroke="#262220" stroke-width="1.3"/></svg>
<svg class="r" style="left:903.5px;top:769px" width="13" height="16" viewBox="0 0 13 16"><path d="M11 8.6 A4.8 4.8 0 0 0 5.4 3.05 M1.4 7 A4.8 4.8 0 0 0 7 12.55" fill="none" stroke="#262220" stroke-width="1.3"/><path d="M7.2 1.2 L5.2 3.05 L7.2 4.9 M5.2 10.7 L7.2 12.55 L5.2 14.4" fill="none" stroke="#262220" stroke-width="1.3"/></svg>
<svg class="r" style="left:1088px;top:769px" width="13" height="14" viewBox="0 0 13 14"><path d="M10.5 4 A5 5 0 1 0 11.3 8.5" fill="none" stroke="#f05023" stroke-width="1.8"/><path d="M7.5 1 L12.3 1.2 L11.8 6 Z" fill="#f05023"/></svg>
<div class="t" style="left:546px;top:5px;font-size:17.5px;font-weight:400;color:#1a0a05;">Void Manager</div>
<div class="t" style="left:576px;top:27px;font-size:9px;font-weight:400;color:#1a0a05;">Project1</div>
<div class="t" style="left:20px;top:70px;font-size:13.34px;font-weight:400;color:#f0f0f0;">Sender</div>
<div class="t" style="left:20px;top:87px;font-size:12.36px;font-weight:400;color:#f0f0f0;">(MEP)</div>
<div class="t" style="left:83px;top:89px;font-size:13.67px;font-weight:700;color:#f0f0f0;">Comment</div>
<div class="t" style="left:178px;top:90px;font-size:12.61px;font-weight:700;color:#f0f0f0;">Tekla</div>
<div class="t" style="left:290.6px;top:71px;font-size:12.78px;font-weight:400;color:#f0f0f0;">Receiver</div>
<div class="t" style="left:290.6px;top:87px;font-size:12.01px;font-weight:400;color:#f0f0f0;">(STR)</div>
<div class="t" style="left:361px;top:89px;font-size:13.67px;font-weight:700;color:#f0f0f0;">Comment</div>
<div class="t" style="left:456px;top:90px;font-size:12.68px;font-weight:700;color:#f0f0f0;">Set Status</div>
<div class="t" style="left:550.5px;top:89px;font-size:13.23px;font-weight:700;color:#8c8c8c;">Create hole</div>
<div class="t" style="left:655px;top:89px;font-size:13.54px;font-weight:700;color:#f0f0f0;">Update hole</div>
<div class="t" style="left:775px;top:81px;font-size:13.61px;font-weight:700;color:#f0f0f0;">Hole</div>
<div class="t" style="left:765px;top:96px;font-size:13.24px;font-weight:700;color:#f0f0f0;">Options</div>
<div class="t" style="left:895px;top:77px;font-size:14.05px;font-weight:400;color:#f0f0f0;">Common</div>
<div class="t" style="left:983.6px;top:82px;font-size:12.9px;font-weight:700;color:#f0f0f0;">Show</div>
<div class="t" style="left:972.7px;top:97px;font-size:12.82px;font-weight:700;color:#f0f0f0;">Elements</div>
<div class="t" style="left:1062.5px;top:90px;font-size:12.53px;font-weight:700;color:#f0f0f0;">Pin</div>
<div class="t" style="left:12px;top:137px;font-size:10.01px;font-weight:400;color:#f0f0f0;">Search Column</div>
<div class="t" style="left:13.3px;top:149px;font-size:13.71px;font-weight:400;color:#f0f0f0;">ControlStatus</div>
<div class="t" style="left:169px;top:137px;font-size:10.06px;font-weight:400;color:#f0f0f0;">Compare Type</div>
<div class="t" style="left:170.4px;top:149px;font-size:13.59px;font-weight:400;color:#f0f0f0;">Contains</div>
<div class="t" style="left:321.6px;top:149px;font-size:13.15px;font-weight:400;color:#9a9a9a;">Search Text</div>
<div class="t" style="left:222.5px;top:187px;font-size:12.04px;font-weight:700;color:#c8c8c8;">ControlStatus</div>
<div class="t" style="left:385px;top:187px;font-size:12.6px;font-weight:700;color:#c8c8c8;">VoidOwner</div>
<div class="t" style="left:496.4px;top:187px;font-size:12.19px;font-weight:700;color:#c8c8c8;">VoidShape</div>
<div class="t" style="left:605px;top:187px;font-size:12.42px;font-weight:700;color:#c8c8c8;">VoidType</div>
<div class="t" style="left:705.5px;top:187px;font-size:12.2px;font-weight:700;color:#c8c8c8;">Comments</div>
<div class="t" style="left:815px;top:188px;font-size:11.83px;font-weight:700;color:#c8c8c8;">GridDistance_X</div>
<div class="t" style="left:950px;top:188px;font-size:11.83px;font-weight:700;color:#c8c8c8;">GridDistance_Y</div>
<div class="t" style="left:1084.6px;top:187px;font-size:12.61px;font-weight:700;color:#c8c8c8;">Mark</div>
<div class="t" style="left:39.4px;top:770px;font-size:13.23px;font-weight:700;color:#f05023;">Back to start page</div>
<div class="t" style="left:1103px;top:771px;font-size:12.51px;font-weight:700;color:#f05023;">Refresh</div>
<div class="t" style="left:776.4px;top:769px;font-size:14.02px;font-weight:400;color:#2e2420;">Fix All (0)</div>
<div class="t" style="left:918px;top:770px;font-size:13.63px;font-weight:400;color:#2e2420;">Fix Selected (0)</div>
<div class="t" style="left:259.7px;top:325px;font-size:12.75px;font-weight:400;color:#f0f0f0;">Comments</div>
<div class="t" style="left:745px;top:325px;font-size:12px;font-weight:400;color:#f0f0f0;">Statuses</div>
<div class="t" style="left:995px;top:325px;font-size:11.77px;font-weight:400;color:#f0f0f0;">Issues</div>
<div class="t" style="left:602.5px;top:348px;font-size:9.48px;font-weight:400;color:#f0f0f0;">11.06.2025 08:38 - KTU</div>
<div class="t" style="left:469.8px;top:363px;font-size:11.94px;font-weight:400;color:#f0f0f0;">I have moved it to nearest possible location</div>
<div class="t" style="left:745px;top:348px;font-size:9.8px;font-weight:400;color:#f0f0f0;">07.05.2024 12:17 - KTU -Accepted but changed</div>
<div class="t" style="left:208.4px;top:222px;font-size:12.7px;font-weight:400;color:#c4c4c4;">Accepted as requested</div>
<div class="t" style="left:371px;top:222px;font-size:12.7px;font-weight:400;color:#c4c4c4;">V</div>
<div class="t" style="left:482px;top:222px;font-size:12.7px;font-weight:400;color:#c4c4c4;">Rectangle</div>
<div class="t" style="left:801px;top:222px;font-size:12.9px;font-weight:400;color:#c4c4c4;">Ak.A+7199 mm</div>
<div class="t" style="left:936px;top:222px;font-size:12.9px;font-weight:400;color:#c4c4c4;">Ak.2-2511 mm</div>
<div class="t" style="left:1071px;top:222px;font-size:12.7px;font-weight:400;color:#c4c4c4;">1</div>
<div class="t" style="left:208.4px;top:272px;font-size:12.7px;font-weight:400;color:#c4c4c4;">Accepted but changed</div>
<div class="t" style="left:371px;top:272px;font-size:12.7px;font-weight:400;color:#c4c4c4;">V</div>
<div class="t" style="left:482px;top:272px;font-size:12.7px;font-weight:400;color:#c4c4c4;">Round</div>
<div class="t" style="left:801px;top:272px;font-size:12.9px;font-weight:400;color:#c4c4c4;">Ak.B-6567 mm</div>
<div class="t" style="left:936px;top:272px;font-size:12.9px;font-weight:400;color:#c4c4c4;">Ak.2-2511 mm</div>
<div class="t" style="left:1071px;top:272px;font-size:12.7px;font-weight:400;color:#c4c4c4;">2</div>
<div class="t" style="left:208.4px;top:396px;font-size:12.7px;font-weight:400;color:#c4c4c4;">Not accepted</div>
<div class="t" style="left:371px;top:396px;font-size:12.7px;font-weight:400;color:#c4c4c4;">E</div>
<div class="t" style="left:482px;top:396px;font-size:12.7px;font-weight:400;color:#c4c4c4;">Rectangle</div>
<div class="t" style="left:801px;top:396px;font-size:12.9px;font-weight:400;color:#c4c4c4;">Ak.B-3251 mm</div>
<div class="t" style="left:936px;top:396px;font-size:12.9px;font-weight:400;color:#c4c4c4;">Ak.2-2511 mm</div>
<div class="t" style="left:1071px;top:396px;font-size:12.7px;font-weight:400;color:#c4c4c4;">3</div>
<div class="t" style="left:208.4px;top:446px;font-size:12.7px;font-weight:400;color:#c4c4c4;">Rejected</div>
<div class="t" style="left:371px;top:446px;font-size:12.7px;font-weight:400;color:#c4c4c4;">E</div>
<div class="t" style="left:482px;top:446px;font-size:12.7px;font-weight:400;color:#c4c4c4;">Round</div>
<div class="t" style="left:801px;top:446px;font-size:12.9px;font-weight:400;color:#c4c4c4;">Ak.B-2539 mm</div>
<div class="t" style="left:936px;top:446px;font-size:12.9px;font-weight:400;color:#c4c4c4;">Ak.2-2511 mm</div>
<div class="t" style="left:1071px;top:446px;font-size:12.7px;font-weight:400;color:#c4c4c4;">4</div>
<div class="t" style="left:208.4px;top:498px;font-size:12.7px;font-weight:400;color:#c4c4c4;">Revised</div>
<div class="t" style="left:371px;top:498px;font-size:12.7px;font-weight:400;color:#c4c4c4;">V</div>
<div class="t" style="left:482px;top:498px;font-size:12.7px;font-weight:400;color:#c4c4c4;">Rectangle</div>
<div class="t" style="left:801px;top:498px;font-size:12.9px;font-weight:400;color:#c4c4c4;">Ak.A+6238 mm</div>
<div class="t" style="left:936px;top:498px;font-size:12.9px;font-weight:400;color:#c4c4c4;">Ak.3-3622 mm</div>
<div class="t" style="left:1071px;top:498px;font-size:12.7px;font-weight:400;color:#c4c4c4;">5</div>
<div class="t" style="left:371px;top:549px;font-size:12.7px;font-weight:400;color:#c4c4c4;">V</div>
<div class="t" style="left:482px;top:549px;font-size:12.7px;font-weight:400;color:#c4c4c4;">Round</div>
<div class="t" style="left:801px;top:549px;font-size:12.9px;font-weight:400;color:#c4c4c4;">Ak.B-7034 mm</div>
<div class="t" style="left:936px;top:549px;font-size:12.9px;font-weight:400;color:#c4c4c4;">Ak.3-3622 mm</div>
<div class="t" style="left:1071px;top:549px;font-size:12.7px;font-weight:400;color:#c4c4c4;">6</div>
<div class="t" style="left:208.4px;top:600px;font-size:12.7px;font-weight:400;color:#c4c4c4;">Accepted as requested</div>
<div class="t" style="left:371px;top:600px;font-size:12.7px;font-weight:400;color:#c4c4c4;">V+E</div>
<div class="t" style="left:482px;top:600px;font-size:12.7px;font-weight:400;color:#c4c4c4;">Rectangle</div>
<div class="t" style="left:801px;top:600px;font-size:12.9px;font-weight:400;color:#c4c4c4;">Ak.C-7174 mm</div>
<div class="t" style="left:936px;top:600px;font-size:12.9px;font-weight:400;color:#c4c4c4;">Ak.2-2511 mm</div>
<div class="t" style="left:1071px;top:600px;font-size:12.7px;font-weight:400;color:#c4c4c4;">7</div>
<div class="t" style="left:371px;top:651px;font-size:12.7px;font-weight:400;color:#c4c4c4;">E</div>
<div class="t" style="left:482px;top:651px;font-size:12.7px;font-weight:400;color:#c4c4c4;">Rectangle</div>
<div class="t" style="left:801px;top:651px;font-size:12.9px;font-weight:400;color:#c4c4c4;">Ak.C-2968 mm</div>
<div class="t" style="left:936px;top:651px;font-size:12.9px;font-weight:400;color:#c4c4c4;">Ak.2-2511 mm</div>
<div class="t" style="left:1071px;top:651px;font-size:12.7px;font-weight:400;color:#c4c4c4;">8</div>
<div class="t" style="left:371px;top:702px;font-size:12.7px;font-weight:400;color:#c4c4c4;">V</div>
<div class="t" style="left:482px;top:702px;font-size:12.7px;font-weight:400;color:#c4c4c4;">Round</div>
<div class="t" style="left:801px;top:702px;font-size:12.9px;font-weight:400;color:#c4c4c4;">Ak.B-6208 mm</div>
<div class="t" style="left:936px;top:702px;font-size:12.9px;font-weight:400;color:#c4c4c4;">Ak.3-3609 mm</div>
<div class="t" style="left:1071px;top:702px;font-size:12.7px;font-weight:400;color:#c4c4c4;">17</div>
<div class="t" style="left:126px;top:215px;font-size:10px;font-weight:400;color:#f2f2f2;">wxh=460x460</div>
<div class="t" style="left:126px;top:227px;font-size:10px;font-weight:400;color:#f2f2f2;">d=460</div>
<div class="t" style="left:126px;top:239px;font-size:10px;font-weight:400;color:#f2f2f2;">V</div>
<div class="t" style="left:126px;top:302px;font-size:10px;font-weight:400;color:#f2f2f2;">ø=260</div>
<div class="t" style="left:126px;top:314px;font-size:10px;font-weight:400;color:#f2f2f2;">d=460</div>
<div class="t" style="left:126px;top:326px;font-size:10px;font-weight:400;color:#f2f2f2;">V</div>
<div class="t" style="left:126px;top:389px;font-size:10px;font-weight:400;color:#f2f2f2;">wxh=600x235</div>
<div class="t" style="left:126px;top:401px;font-size:10px;font-weight:400;color:#f2f2f2;">d=460</div>
<div class="t" style="left:126px;top:413px;font-size:10px;font-weight:400;color:#f2f2f2;">E</div>
<div class="t" style="left:126px;top:440px;font-size:10px;font-weight:400;color:#f2f2f2;">ø=120</div>
<div class="t" style="left:126px;top:452px;font-size:10px;font-weight:400;color:#f2f2f2;">d=460</div>
<div class="t" style="left:126px;top:464px;font-size:10px;font-weight:400;color:#f2f2f2;">E</div>
<div class="t" style="left:126px;top:491px;font-size:10px;font-weight:400;color:#f2f2f2;">wxh=460x460</div>
<div class="t" style="left:126px;top:503px;font-size:10px;font-weight:400;color:#f2f2f2;">d=300</div>
<div class="t" style="left:126px;top:515px;font-size:10px;font-weight:400;color:#f2f2f2;">V</div>
<div class="t" style="left:126px;top:543px;font-size:10px;font-weight:400;color:#f2f2f2;">ø=260</div>
<div class="t" style="left:126px;top:554px;font-size:10px;font-weight:400;color:#f2f2f2;">d=300</div>
<div class="t" style="left:126px;top:566px;font-size:10px;font-weight:400;color:#f2f2f2;">V</div>
<div class="t" style="left:126px;top:593px;font-size:10px;font-weight:400;color:#f2f2f2;">wxh=850x260</div>
<div class="t" style="left:126px;top:605px;font-size:10px;font-weight:400;color:#f2f2f2;">d=460</div>
<div class="t" style="left:126px;top:617px;font-size:10px;font-weight:400;color:#f2f2f2;">V+E</div>
<div class="t" style="left:126px;top:644px;font-size:10px;font-weight:400;color:#f2f2f2;">wxh=600x235</div>
<div class="t" style="left:126px;top:656px;font-size:10px;font-weight:400;color:#f2f2f2;">d=460</div>
<div class="t" style="left:126px;top:668px;font-size:10px;font-weight:400;color:#f2f2f2;">E</div>
<div class="t" style="left:126px;top:695px;font-size:10px;font-weight:400;color:#f2f2f2;">ø=260</div>
<div class="t" style="left:126px;top:707px;font-size:10px;font-weight:400;color:#f2f2f2;">d=300</div>
<div class="t" style="left:126px;top:719px;font-size:10px;font-weight:400;color:#f2f2f2;">V</div>
</body></html>
